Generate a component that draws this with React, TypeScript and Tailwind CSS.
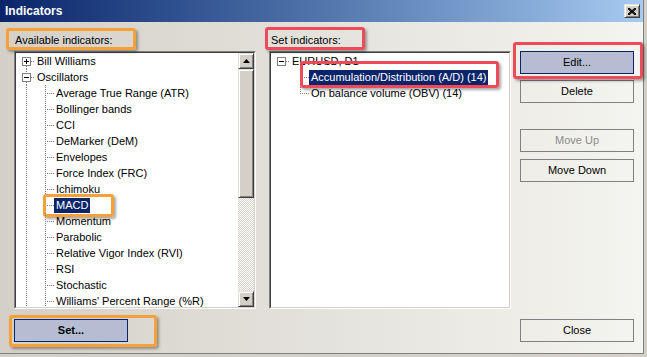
import type { ReactNode } from 'react'

const OSCILLATORS = [
  'Average True Range (ATR)',
  'Bollinger bands',
  'CCI',
  'DeMarker (DeM)',
  'Envelopes',
  'Force Index (FRC)',
  'Ichimoku',
  'MACD',
  'Momentum',
  'Parabolic',
  'Relative Vigor Index (RVI)',
  'RSI',
  'Stochastic',
  "Williams' Percent Range (%R)",
]

const DOT = { stroke: '#808080', strokeDasharray: '1 1' }

function Expander({ open, above, below }: { open: boolean; above?: boolean; below?: boolean }) {
  return (
    <svg width="19" height="16" className="shrink-0">
      {above && <line x1="10.5" y1="0" x2="10.5" y2="4" {...DOT} />}
      {below && <line x1="10.5" y1="13" x2="10.5" y2="16" {...DOT} />}
      <rect x="6.5" y="4.5" width="8" height="8" fill="#fff" stroke="#808080" />
      <line x1="8" y1="8.5" x2="13" y2="8.5" stroke="#000" />
      {!open && <line x1="10.5" y1="6" x2="10.5" y2="11" stroke="#000" />}
      <line x1="15" y1="8.5" x2="19" y2="8.5" {...DOT} />
    </svg>
  )
}

function Branch({ root, last }: { root?: boolean; last?: boolean }) {
  return (
    <svg width="38" height="16" className="shrink-0">
      {root && <line x1="10.5" y1="0" x2="10.5" y2="16" {...DOT} />}
      <line x1="29.5" y1="0" x2="29.5" y2={last ? 9 : 16} {...DOT} />
      <line x1="31" y1="8.5" x2="38" y2="8.5" {...DOT} />
    </svg>
  )
}

function Label({ text, selected }: { text: string; selected?: boolean }) {
  return (
    <span
      className={`inline-block h-[15px] px-[2px] leading-[15px] ${selected ? 'bg-[#0a246a] text-white' : ''}`}
    >
      {text}
    </span>
  )
}

function Mark({ className }: { className: string }) {
  return (
    <span
      className={`pointer-events-none absolute rounded-[3px] border-[3px] shadow-[2px_2px_3px_rgba(0,0,0,0.35)] ${className}`}
    />
  )
}

function Sunken({ children }: { children: ReactNode }) {
  return (
    <div className="h-[258px] w-[242px] border border-t-[#808080] border-l-[#808080] border-r-white border-b-white">
      <div className="flex h-full border border-t-[#404040] border-l-[#404040] border-r-[#d4d0c8] border-b-[#d4d0c8] bg-white">
        {children}
      </div>
    </div>
  )
}

const RAISED =
  'border border-t-[#e4e1da] border-l-[#e4e1da] border-r-[#404040] border-b-[#404040] bg-[#d4d0c8] shadow-[inset_1px_1px_0_#ffffff,inset_-1px_-1px_0_#808080]'

function Arrow({ up }: { up?: boolean }) {
  return (
    <div className={`flex h-4 w-4 shrink-0 items-center justify-center ${RAISED}`}>
      <svg width="7" height="4">
        <polygon points={up ? '3.5,0 7,4 0,4' : '0,0 7,0 3.5,4'} fill="#000" />
      </svg>
    </div>
  )
}

function Button({ children, kind }: { children: ReactNode; kind?: 'active' | 'bold' | 'disabled' }) {
  const look =
    kind === 'active' || kind === 'bold'
      ? 'border-[#0a246a] bg-[#b6bdd2]'
      : 'border-[#808080] bg-transparent'
  return (
    <div
      className={`flex h-[23px] w-[114px] items-center justify-center border ${look} ${kind === 'bold' ? 'font-bold' : ''} ${kind === 'disabled' ? 'text-[#8a8a8a]' : ''}`}
    >
      {children}
    </div>
  )
}

export default function App() {
  return (
    <div className="h-[357px] w-[647px] overflow-hidden bg-[#d4d0c8] font-['Liberation_Sans',Arial,sans-serif] text-[11px] text-black">
      <div className="flex h-[354px] w-[644px] flex-col border-r border-b border-[#808080]">
        <div className="flex h-[22px] shrink-0 items-center justify-between bg-linear-to-r from-[#0a246a] to-[#a6caf0] pr-[3px] pl-[5px]">
          <span className="text-[12px] font-bold text-white">Indicators</span>
          <div className={`flex h-[14px] w-[16px] items-center justify-center ${RAISED}`}>
            <svg width="8" height="7">
              <path d="M0 0 L8 7 M1 0 L8 6 M0 1 L7 7 M8 0 L0 7 M7 0 L0 6 M8 1 L1 7" stroke="#000" strokeWidth="1" />
            </svg>
          </div>
        </div>

        <div className="flex flex-1 bg-linear-to-r from-[#d4d0c8] to-[#f4f4f0] pt-[9px] pl-[14px]">
          <div className="flex w-[242px] flex-col">
            <div className="relative mb-[2px] h-[18px] pl-[1px] leading-[18px]">
              Available indicators:
              <Mark className="-top-[3px] -left-[8px] h-[22px] w-[130px] border-[#f6a03a]" />
            </div>
            <Sunken>
              <div className="flex-1 overflow-hidden">
                <div className="flex h-4 items-center whitespace-nowrap">
                  <Expander open={false} below />
                  <Label text="Bill Williams" />
                </div>
                <div className="flex h-4 items-center whitespace-nowrap">
                  <Expander open above below />
                  <Label text="Oscillators" />
                </div>
                {OSCILLATORS.map((name) => (
                  <div key={name} className="relative flex h-4 items-center whitespace-nowrap">
                    <Branch root />
                    <Label text={name} selected={name === 'MACD'} />
                    {name === 'MACD' && (
                      <Mark className="-top-[3px] left-[27px] h-[23px] w-[71px] border-[#f6a03a]" />
                    )}
                  </div>
                ))}
              </div>
              <div className="flex w-4 flex-col">
                <Arrow up />
                <div className={`h-[129px] ${RAISED}`} />
                <div className="flex-1 bg-[image:repeating-conic-gradient(#d4d0c8_0%_25%,#ffffff_0%_50%)] bg-[length:2px_2px]" />
                <Arrow />
              </div>
            </Sunken>
            <div className="relative mt-[10px] w-[114px]">
              <Button kind="bold">Set...</Button>
              <Mark className="-top-[4px] -left-[5px] h-[32px] w-[148px] border-[#f6a03a]" />
            </div>
          </div>

          <div className="ml-[13px] flex w-[242px] flex-col">
            <div className="relative mb-[2px] h-[18px] pl-[2px] leading-[18px]">
              Set indicators:
              <Mark className="-top-[4px] -left-[4px] h-[23px] w-[100px] border-[#ee4a5a]" />
            </div>
            <Sunken>
              <div className="flex-1 overflow-hidden">
                <div className="flex h-4 items-center whitespace-nowrap">
                  <Expander open />
                  <Label text="EURUSD, D1" />
                </div>
                <div className="relative flex h-4 items-center whitespace-nowrap">
                  <Branch />
                  <Label text="Accumulation/Distribution (A/D) (14)" selected />
                  <Mark className="-top-[8px] left-[29px] h-[27px] w-[199px] border-[#ee4a5a]" />
                </div>
                <div className="flex h-4 items-center whitespace-nowrap">
                  <Branch last />
                  <Label text="On balance volume (OBV) (14)" />
                </div>
              </div>
            </Sunken>
          </div>

          <div className="ml-[9px] flex w-[114px] flex-col pt-[20px] pb-[11px]">
            <div className="relative">
              <Button kind="active">Edit...</Button>
              <Mark className="-top-[9px] -left-[7px] h-[37px] w-[130px] border-[#ee4a5a]" />
            </div>
            <div className="mt-[6px]">
              <Button>Delete</Button>
            </div>
            <div className="mt-[26px]">
              <Button kind="disabled">Move Up</Button>
            </div>
            <div className="mt-[7px]">
              <Button>Move Down</Button>
            </div>
            <div className="mt-auto">
              <Button>Close</Button>
            </div>
          </div>
        </div>
      </div>
    </div>
  )
}
